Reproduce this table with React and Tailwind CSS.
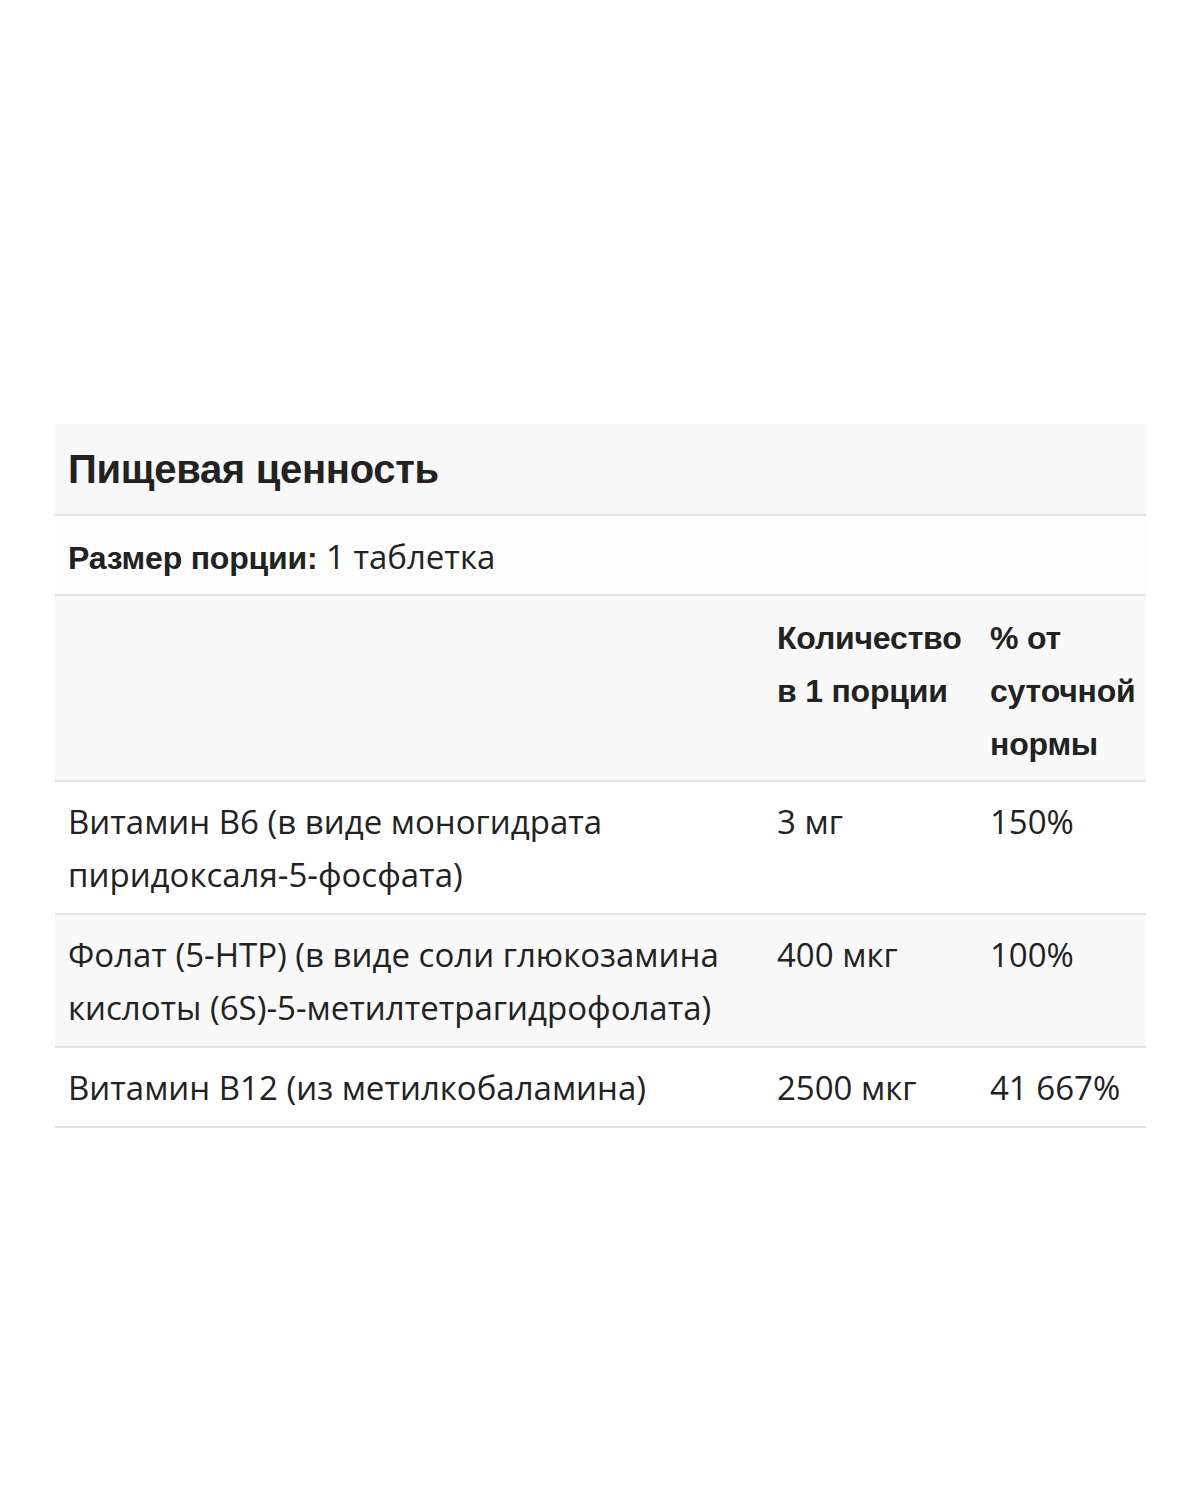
import React from "react";

const rows = [
  {
    name: "Витамин B6 (в виде моногидрата пиридоксаля-5-фосфата)",
    amount: "3 мг",
    dv: "150%",
    shaded: false,
  },
  {
    name: "Фолат (5-HTP) (в виде соли глюкозамина кислоты (6S)-5-метилтетрагидрофолата)",
    amount: "400 мкг",
    dv: "100%",
    shaded: true,
  },
  {
    name: "Витамин B12 (из метилкобаламина)",
    amount: "2500 мкг",
    dv: "41 667%",
    shaded: false,
  },
];

const bold = "font-['Liberation_Sans',Arial,sans-serif] font-bold";
const regular = "font-['Open_Sans',sans-serif] font-normal";

export default function App() {
  return (
    <div className="min-h-[1500px] w-[1200px] bg-white pt-[424px] pl-[55px] text-[#222]">
      <div className="w-[1091px]">
        {/* Title */}
        <div className="border-b-2 border-[#e3e3e3] bg-[#f8f8f8] pt-[13px] pb-[12px] pl-[13px]">
          <h2 className={`${bold} text-[40px] leading-[65px] tracking-[-0.3px]`}>
            Пищевая ценность
          </h2>
        </div>

        {/* Serving size */}
        <div className="border-b-2 border-[#e3e3e3] bg-[#fdfdfd] pt-[14px] pb-[9px] pl-[13px] text-[33px] leading-[53px]">
          <span className={`${bold} text-[32px] tracking-[-0.2px]`}>Размер порции:</span>{" "}
          <span className={regular}>1 таблетка</span>
        </div>

        {/* Column header */}
        <div className="grid grid-cols-[709px_213px_169px] border-b-2 border-[#e3e3e3] bg-[#f9f9f9] pt-[16px] pb-[9px]">
          <div />
          <div className={`${bold} pl-[13px] pr-[6px] text-[32px] leading-[53px] tracking-[-0.2px]`}>
            Количество в 1 порции
          </div>
          <div className={`${bold} pl-[13px] pr-[6px] text-[32px] leading-[53px] tracking-[-0.2px]`}>
            % от суточной нормы
          </div>
        </div>

        {/* Nutrient rows */}
        {rows.map((row) => (
          <div
            key={row.name}
            className={`grid grid-cols-[709px_213px_169px] border-b-2 border-[#e3e3e3] pt-[13px] pb-[12px] ${regular} text-[33px] leading-[53px] ${
              row.shaded ? "bg-[#f9f9f9]" : "bg-white"
            }`}
          >
            <div className="pl-[13px] pr-[20px]">{row.name}</div>
            <div className="pl-[13px] pr-[6px]">{row.amount}</div>
            <div className="pl-[13px] pr-[6px]">{row.dv}</div>
          </div>
        ))}
      </div>
    </div>
  );
}
